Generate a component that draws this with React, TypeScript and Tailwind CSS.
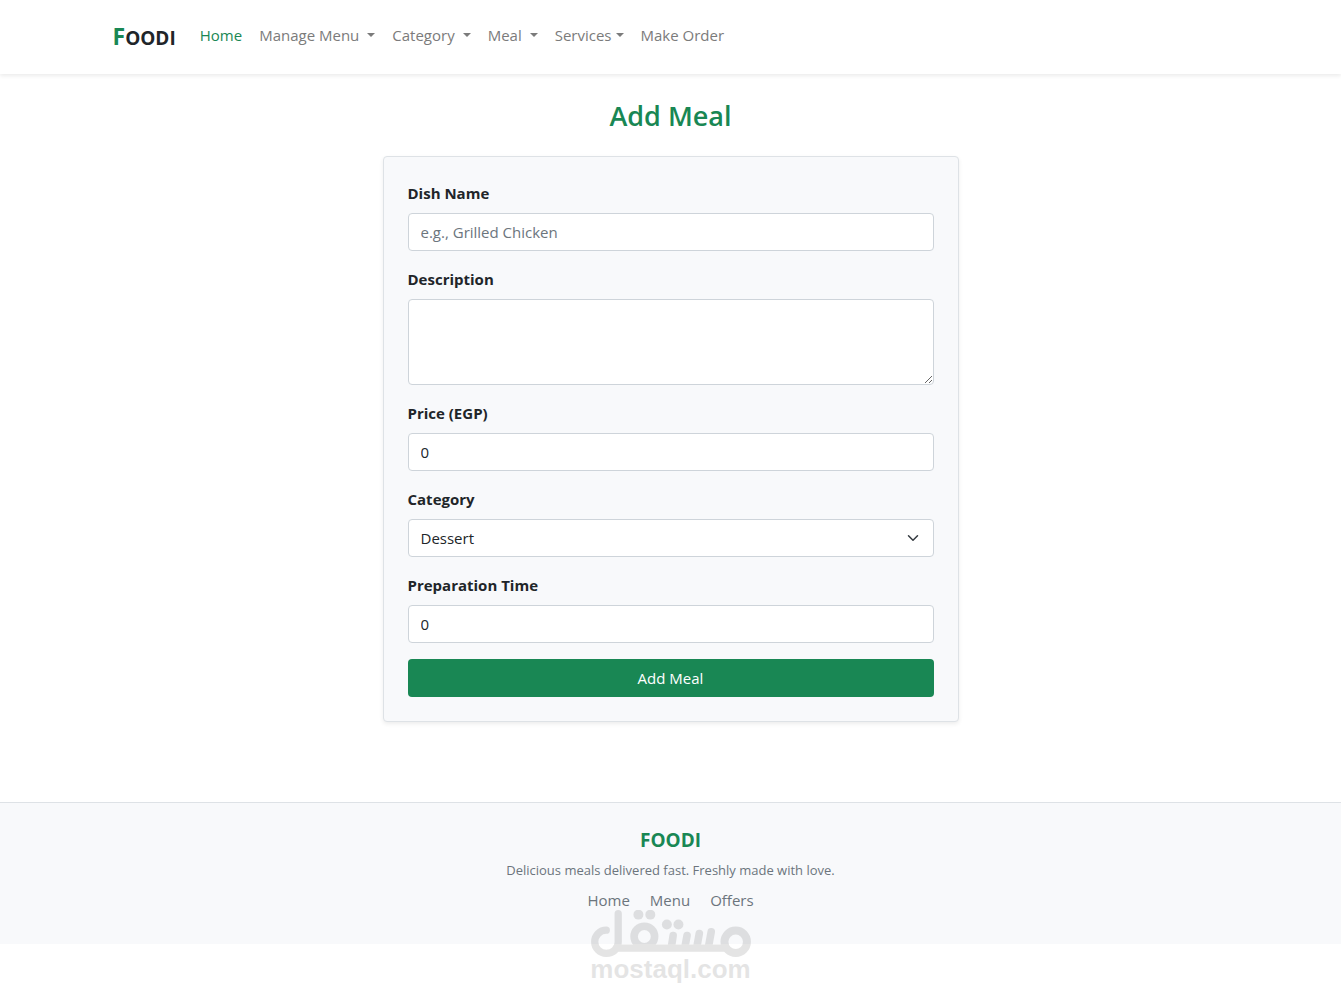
import React from "react";

type NavItem = { label: string; menu?: boolean; gap?: string };

const navItems: NavItem[] = [
  { label: "Manage Menu", menu: true, gap: "ml-2" },
  { label: "Category", menu: true, gap: "ml-2" },
  { label: "Meal", menu: true, gap: "ml-2" },
  { label: "Services", menu: true, gap: "ml-1" },
  { label: "Make Order" },
];

const controlClass =
  "block w-full rounded border border-[#ced4da] bg-white px-3 text-[15px] leading-6 text-[#212529] placeholder:text-[#6c757d] focus:outline-none focus:border-[#198754]";

const Header: React.FC = () => {
  return (
    <header className="bg-white py-4 shadow-[0_2px_4px_rgba(0,0,0,0.08)]">
      <nav className="mx-auto flex max-w-[1140px] items-start px-3">
        <a href="#" className="mr-6 text-[19px] leading-10 font-bold text-[#212529]">
          <span className="text-[23px] text-[#198754]">F</span>OODI
        </a>
        <ul className="flex items-center gap-[17px] text-[15px] leading-[38px] text-[#7b7b7b]">
          <li>
            <a href="#" className="text-[#198754]">
              Home
            </a>
          </li>
          {navItems.map((item) => (
            <li key={item.label}>
              {item.menu ? (
                <button type="button" className="flex items-center">
                  {item.label}
                  <span
                    className={`${item.gap} border-x-4 border-t-4 border-x-transparent border-t-current`}
                  />
                </button>
              ) : (
                <a href="#">{item.label}</a>
              )}
            </li>
          ))}
        </ul>
      </nav>
    </header>
  );
};

const Field: React.FC<{ id: string; label: string; children: React.ReactNode }> = ({
  id,
  label,
  children,
}) => {
  return (
    <div className="mb-4">
      <label htmlFor={id} className="mb-2 block text-[15px] leading-6 font-bold">
        {label}
      </label>
      {children}
    </div>
  );
};

const MealForm: React.FC = () => {
  return (
    <form
      className="rounded border border-[#dee2e6] bg-[#f8f9fb] p-6 shadow-[0_2px_4px_rgba(0,0,0,0.075)]"
      onSubmit={(e) => e.preventDefault()}
    >
      <Field id="name" label="Dish Name">
        <input
          id="name"
          type="text"
          placeholder="e.g., Grilled Chicken"
          className={`${controlClass} py-1.5`}
        />
      </Field>
      <Field id="description" label="Description">
        <textarea id="description" rows={3} className={`${controlClass} py-1.5`} />
      </Field>
      <Field id="price" label="Price (EGP)">
        <input id="price" type="text" defaultValue="0" className={`${controlClass} py-1.5`} />
      </Field>
      <Field id="category" label="Category">
        <div className="relative">
          <select id="category" className={`${controlClass} appearance-none py-1.5`}>
            <option>Dessert</option>
            <option>Main Course</option>
          </select>
          <svg
            viewBox="0 0 16 16"
            className="pointer-events-none absolute top-[13px] right-[15px] h-3 w-3"
            fill="none"
            stroke="#343a40"
            strokeWidth="2"
            strokeLinecap="round"
            strokeLinejoin="round"
          >
            <path d="m2 5 6 6 6-6" />
          </svg>
        </div>
      </Field>
      <Field id="time" label="Preparation Time">
        <input id="time" type="text" defaultValue="0" className={`${controlClass} py-1.5`} />
      </Field>
      <button
        type="submit"
        className="block w-full rounded bg-[#198754] py-[7px] text-[15px] leading-6 text-white"
      >
        Add Meal
      </button>
    </form>
  );
};

const Watermark: React.FC = () => {
  return (
    <div className="pointer-events-none absolute top-[107px] left-1/2 flex -translate-x-1/2 flex-col items-center opacity-10">
      <svg
        viewBox="60 90 483 142"
        className="h-[47px] w-[161px]"
        fill="none"
        stroke="#000"
        strokeWidth="22"
        strokeLinecap="round"
        strokeLinejoin="round"
      >
        <path d="M106 151a35 35 0 1 0 0 70c20 0 36-14 36-34V101" />
        <path d="M136 205h326" />
        <circle cx="221" cy="170" r="31" strokeWidth="23" />
        <circle cx="497" cy="186" r="34" strokeWidth="24" />
        <path d="M308 167l-5 33M350 167l-6 33M387 161l-7 39M423 156l-8 44" strokeWidth="23" />
        <g fill="#000" stroke="none">
          <circle cx="203" cy="104" r="15" />
          <circle cx="239" cy="104" r="15" />
          <circle cx="289" cy="134" r="15" />
          <circle cx="324" cy="134" r="15" />
        </g>
      </svg>
      <span className="font-['Liberation_Sans',sans-serif] text-[26px] leading-6 font-bold text-black">
        mostaql.com
      </span>
    </div>
  );
};

const Footer: React.FC = () => {
  return (
    <footer className="relative mt-20 border-t border-[#dee2e6] bg-[#f8f9fb] pt-[25px] pb-8 text-center text-[#6c757d]">
      <h5 className="mb-2 text-[19px] leading-6 font-bold text-[#198754]">FOODI</h5>
      <p className="mb-2 text-[13px] leading-5">
        Delicious meals delivered fast. Freshly made with love.
      </p>
      <div className="flex justify-center gap-5 text-[15px] leading-6">
        <a href="#">Home</a>
        <a href="#">Menu</a>
        <a href="#">Offers</a>
      </div>
      <Watermark />
    </footer>
  );
};

export default function App() {
  return (
    <div className="min-h-screen bg-white font-['Open_Sans',sans-serif] text-[#212529]">
      <Header />
      <main className="mx-auto max-w-[576px] pt-6">
        <h2 className="mb-[22px] text-center text-[27px] leading-9 font-semibold text-[#198754]">
          Add Meal
        </h2>
        <MealForm />
      </main>
      <Footer />
    </div>
  );
}
